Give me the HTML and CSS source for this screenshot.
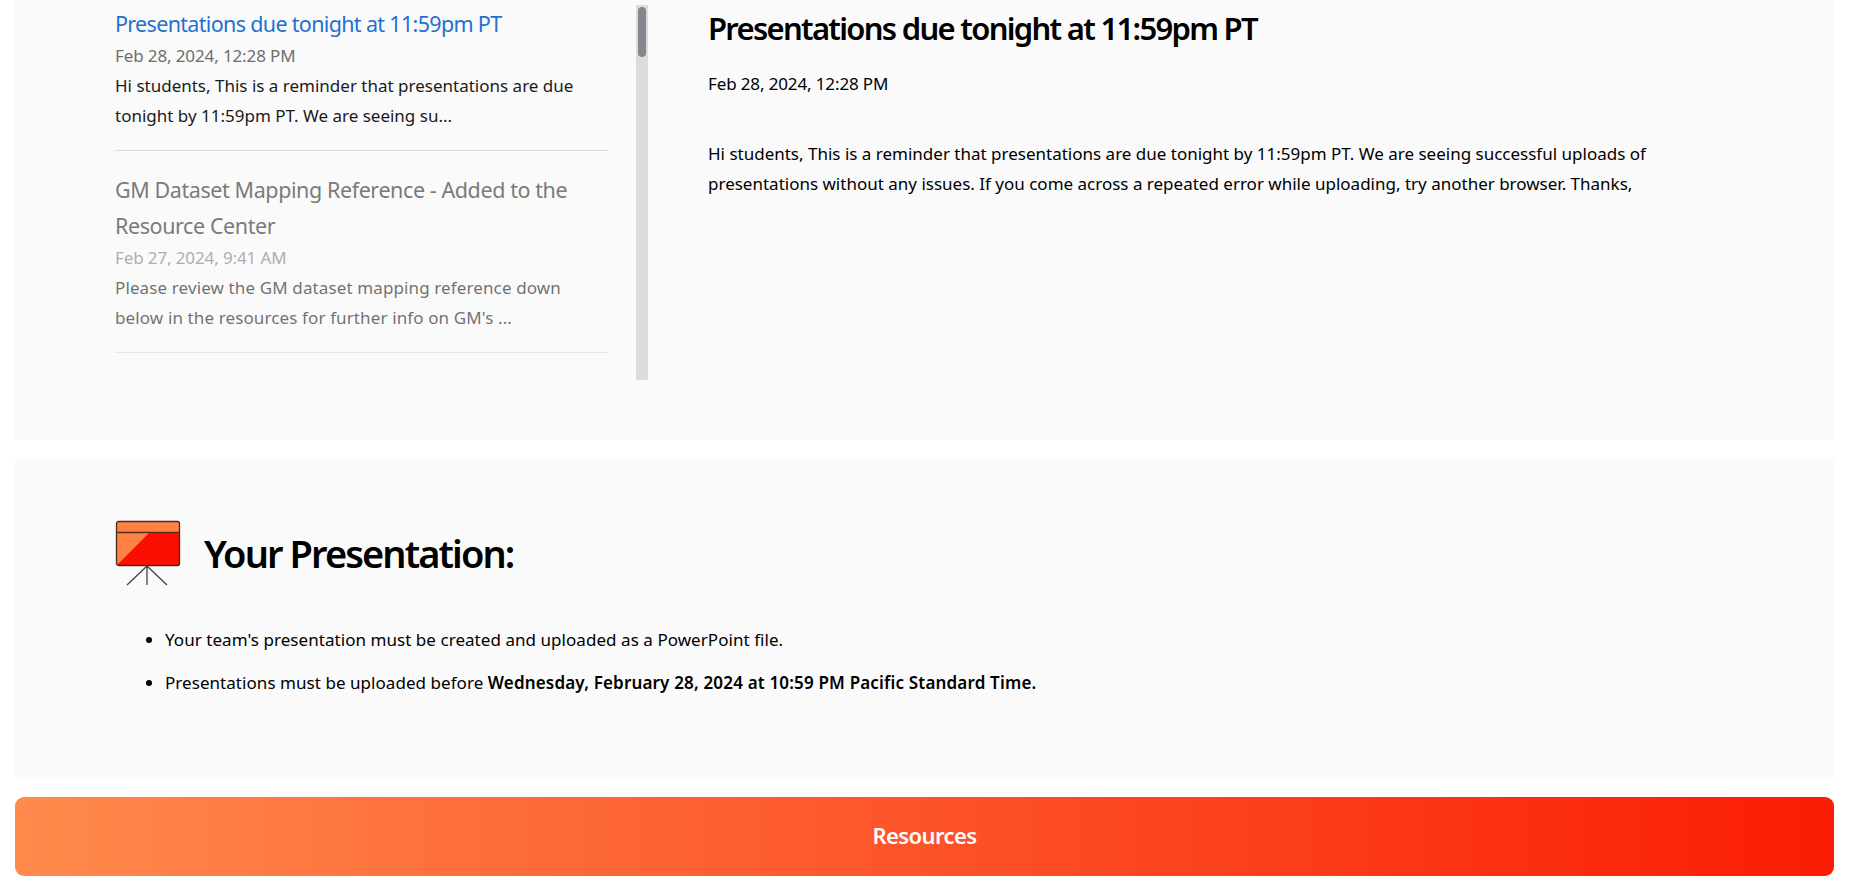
FILE: index.html
```html
<!DOCTYPE html>
<html lang="en">
<head>
<meta charset="utf-8">
<title>Presentations</title>
<link rel="stylesheet" href="styles.css">
</head>
<body>
<main class="page">
  <section class="panel announcements">
    <div class="sidebar">
      <div class="list">
        <article class="item">
          <h3 class="item-title active">Presentations due tonight at 11:59pm PT</h3>
          <p class="item-date">Feb 28, 2024, 12:28 PM</p>
          <p class="item-text">Hi students, This is a reminder that presentations are due tonight by 11:59pm PT. We are seeing su...</p>
        </article>
        <article class="item muted">
          <h3 class="item-title">GM Dataset Mapping Reference - Added to the Resource Center</h3>
          <p class="item-date">Feb 27, 2024, 9:41 AM</p>
          <p class="item-text">Please review the GM dataset mapping reference down below in the resources for further info on GM's ...</p>
        </article>
      </div>
      <div class="track"><div class="thumb"></div></div>
    </div>
    <div class="detail">
      <h2 class="detail-title">Presentations due tonight at 11:59pm PT</h2>
      <p class="detail-date">Feb 28, 2024, 12:28 PM</p>
      <p class="detail-text">Hi students, This is a reminder that presentations are due tonight by 11:59pm PT. We are seeing successful uploads of presentations without any issues. If you come across a repeated error while uploading, try another browser. Thanks,</p>
    </div>
  </section>
  <section class="panel presentation">
    <div class="heading-row">
      <svg class="easel" width="66" height="66" viewBox="0 0 66 66" aria-hidden="true">
        <path d="M32 46 L12 65 M32 46 V65 M32 46 L52 65" fill="none" stroke="#444" stroke-width="1.3"/>
        <rect x="1.5" y="1.5" width="63" height="44" rx="2" fill="#fa0f00"/>
        <path d="M2 13 H34 L2 45 Z" fill="#ff8243"/>
        <path d="M2 2 H64 V12 H2 Z" fill="#ff8243"/>
        <path d="M2 12.5 H64" stroke="#5b2a17" stroke-width="1.5"/>
        <rect x="1.5" y="1.5" width="63" height="44" rx="2" fill="none" stroke="#4b2a20" stroke-width="1.3"/>
      </svg>
      <h2 class="heading">Your Presentation:</h2>
    </div>
    <ul class="notes">
      <li>Your team's presentation must be created and uploaded as a PowerPoint file.</li>
      <li>Presentations must be uploaded before <strong>Wednesday, February 28, 2024 at 10:59 PM Pacific Standard Time.</strong></li>
    </ul>
  </section>
  <div class="resources">Resources</div>
</main>
</body>
</html>
```
FILE: styles.css
```css
* { box-sizing: border-box; }
html, body { margin: 0; padding: 0; background: #fff; }
body { font-family: "Noto Sans", "Open Sans", sans-serif; color: #000; overflow: hidden; }
h2, h3, p, ul { margin: 0; padding: 0; }

.page { display: flex; flex-direction: column; gap: 20px; padding: 0 23px 16px 15px; height: 892px; }
.panel { background: #fafafa; }

.announcements { height: 440px; display: flex; padding: 5px 0 0 100px; gap: 60px; }
.sidebar { display: flex; width: 533px; height: 375px; gap: 28px; flex: none; }
.list { width: 493px; flex: none; padding-top: 1px; }
.item { padding-bottom: 19px; border-bottom: 1px solid #dcdcdc; margin-bottom: 21px; }
.item-title { font-size: 21.5px; line-height: 36px; font-weight: 400; color: #2c2c2c; letter-spacing: -0.41px; }
.item-title.active { color: #2470d0; letter-spacing: -0.67px; }
.item-date { font-size: 17px; line-height: 26px; color: #6e6e6e; letter-spacing: -0.12px; margin-top: 1px; }
.item-text { font-size: 17px; line-height: 30px; color: #1a1a1a; letter-spacing: 0; margin-top: 2px; }
.muted { opacity: .62; }
.muted .item-text { letter-spacing: 0.12px; }
.muted .item-date { color: #808080; }
.track { width: 12px; height: 375px; background: #dcdcdc; padding: 2px 2px 0; flex: none; }
.thumb { height: 50px; background: #85858f; border-radius: 4px; }

.detail { width: 960px; }
.detail-title { font-size: 31px; line-height: 40px; font-weight: 600; letter-spacing: -1.7px; margin-top: 3px; }
.detail-date { font-size: 17px; line-height: 26px; letter-spacing: -0.13px; margin-top: 23px; }
.detail-text { font-size: 17px; line-height: 30px; margin-top: 42px; }

.presentation { height: 317px; padding: 60px 0 0 100px; }
.heading-row { display: flex; align-items: flex-start; gap: 23px; }
.heading { font-size: 38px; line-height: 66px; font-weight: 600; letter-spacing: -1.9px; }
.notes { margin: 39px 0 0 50px; font-size: 17px; line-height: 30px; letter-spacing: 0.05px; }
.notes li { margin-bottom: 13px; }
.notes strong { font-weight: 600; letter-spacing: 0.17px; }

.resources { height: 79px; padding-bottom: 3px; border-radius: 9px; background: linear-gradient(90deg, #ff8a4c, #fa1c05); color: #fff; display: flex; align-items: center; justify-content: center; font-size: 22px; font-weight: 600; letter-spacing: -0.6px; }
```
